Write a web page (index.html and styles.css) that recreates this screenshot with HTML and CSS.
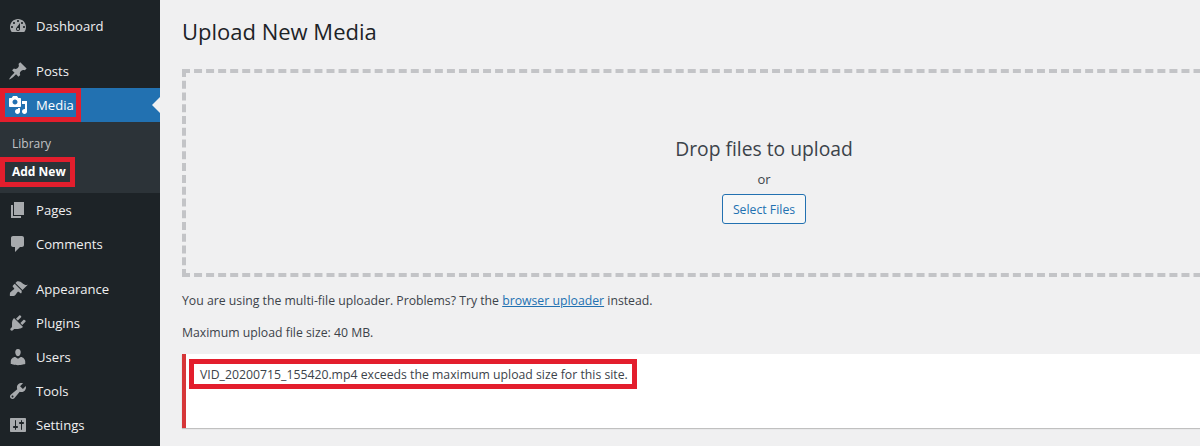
FILE: index.html
```html
<!DOCTYPE html>
<html lang="en">
<head>
<meta charset="utf-8">
<title>Upload New Media</title>
<link rel="stylesheet" href="styles.css">
</head>
<body>
<div class="app">
  <nav class="side">
    <a class="item"><svg class="ico" viewBox="0 0 20 20"><path fill-rule="evenodd" d="M3.76 16h12.48c1.1-1.37 1.76-3.11 1.76-5 0-4.42-3.58-8-8-8s-8 3.58-8 8c0 1.89.66 3.63 1.76 5zM10 4c.55 0 1 .45 1 1s-.45 1-1 1-1-.45-1-1 .45-1 1-1zM6 6c.55 0 1 .45 1 1s-.45 1-1 1-1-.45-1-1 .45-1 1-1zm8 0c.55 0 1 .45 1 1s-.45 1-1 1-1-.45-1-1 .45-1 1-1zm-5.37 5.55L12 7v6c0 1.1-.9 2-2 2s-2-.9-2-2c0-.57.24-1.08.63-1.45zM4 10c.55 0 1 .45 1 1s-.45 1-1 1-1-.45-1-1 .45-1 1-1zm12 0c.55 0 1 .45 1 1s-.45 1-1 1-1-.45-1-1 .45-1 1-1zm-5 3c0-.55-.45-1-1-1s-1 .45-1 1 .45 1 1 1 1-.45 1-1z"/></svg>Dashboard</a>
    <div class="sep"></div>
    <a class="item"><svg class="ico" viewBox="0 0 20 20"><path d="M10.44 3.02l1.82-1.82 6.36 6.35-1.83 1.82c-1.05-.68-2.48-.57-3.41.36l-.75.75c-.92.93-1.04 2.35-.35 3.41l-1.83 1.82-2.41-2.41-2.8 2.79c-.42.42-3.38 2.71-3.8 2.29s1.86-3.39 2.28-3.81l2.79-2.79L4.1 9.36l1.83-1.82c1.05.69 2.48.57 3.4-.36l.75-.75c.93-.92 1.05-2.35.36-3.41z"/></svg>Posts</a>
    <a class="item current"><svg class="ico" viewBox="0 0 20 20"><path fill-rule="evenodd" d="M13 11V4c0-.55-.45-1-1-1h-1.67L9 1H5L3.67 3H2c-.55 0-1 .45-1 1v7c0 .55.45 1 1 1h10c.55 0 1-.45 1-1zM7 4.5c1.38 0 2.5 1.12 2.5 2.5S8.38 9.5 7 9.5 4.5 8.38 4.5 7 5.62 4.5 7 4.5zM14 6h5v10.5c0 1.38-1.12 2.5-2.5 2.5S14 17.88 14 16.5s1.12-2.5 2.5-2.5c.17 0 .34.02.5.05V9h-3V6zm-4 8.05V13h2v3.5c0 1.38-1.12 2.5-2.5 2.5S7 17.88 7 16.5 8.12 14 9.5 14c.17 0 .34.02.5.05z"/></svg>Media<span class="mark mark-media"></span></a>
    <div class="sub">
      <a class="sub-item">Library</a>
      <a class="sub-item strong">Add New<span class="mark mark-add"></span></a>
    </div>
    <a class="item"><svg class="ico" viewBox="0 0 20 20"><path d="M6 15V2h10v13H6zm-1 1h8v2H3V5h2v11z"/></svg>Pages</a>
    <a class="item"><svg class="ico" viewBox="0 0 20 20"><path d="M5 2h9c1.1 0 2 .9 2 2v7c0 1.1-.9 2-2 2h-2l-5 5v-5H5c-1.1 0-2-.9-2-2V4c0-1.1.9-2 2-2z"/></svg>Comments</a>
    <div class="sep"></div>
    <a class="item"><svg class="ico" viewBox="0 0 20 20"><path d="M14.48 11.06L7.41 3.99l1.5-1.5c.5-.56 2.3-.47 3.51.32 1.21.8 1.43 1.28 2.91 2.1 1.18.64 2.45 1.26 4.45.85zm-.71.71L6.7 4.7 4.93 6.47c-.39.39-.39 1.02 0 1.41l1.06 1.06c.39.39.39 1.03 0 1.42-.6.6-1.43 1.11-2.21 1.69-.35.26-.7.53-1.01.84C1.43 13.23 1.96 17 2 17s3.77.57 5.11-.77c.31-.31.58-.66.84-1.01.58-.78 1.09-1.61 1.69-2.21.39-.39 1.02-.39 1.41 0l1.06 1.06c.39.39 1.02.39 1.41 0z"/></svg>Appearance</a>
    <a class="item"><svg class="ico" viewBox="0 0 20 20"><path d="M13.11 4.36L9.87 7.6 8 5.73l3.24-3.24c.35-.34 1.05-.2 1.56.32.52.51.66 1.21.31 1.55zm-8 1.77l.91-1.12 9.01 9.01-1.19.84c-.71.71-2.63 1.16-3.82 1.16H6.14L4.9 17.26c-.59.59-1.54.59-2.12 0-.59-.58-.59-1.53 0-2.12l1.24-1.24v-3.88c0-1.13.4-3.19 1.09-3.89zm7.26 3.97l3.24-3.24c.34-.35 1.04-.21 1.55.31.52.51.66 1.21.31 1.55l-3.24 3.25z"/></svg>Plugins</a>
    <a class="item"><svg class="ico" viewBox="0 0 20 20"><path d="M10 9.25c-2.27 0-2.73-3.44-2.73-3.44C7 4.02 7.82 2 9.97 2c2.16 0 2.98 2.02 2.71 3.81 0 0-.41 3.44-2.68 3.44zm0 2.57L12.72 10c2.39 0 4.52 2.33 4.52 4.53v2.49s-3.65 1.13-7.24 1.13c-3.65 0-7.24-1.13-7.24-1.13v-2.49c0-2.25 1.94-4.48 4.47-4.48z"/></svg>Users</a>
    <a class="item"><svg class="ico" viewBox="0 0 20 20"><path fill-rule="evenodd" d="M16.68 9.77c-1.34 1.34-3.3 1.67-4.95.99l-5.41 6.52c-.99.99-2.59.99-3.58 0s-.99-2.59 0-3.57l6.52-5.42c-.68-1.65-.35-3.61.99-4.95 1.28-1.28 3.12-1.62 4.72-1.06l-2.89 2.89 2.82 2.82 2.86-2.87c.53 1.58.18 3.39-1.08 4.65zM3.81 16.21c.4.39 1.04.39 1.43 0 .4-.4.4-1.04 0-1.43-.39-.4-1.03-.4-1.43 0-.39.39-.39 1.03 0 1.43z"/></svg>Tools</a>
    <a class="item"><svg class="ico" viewBox="0 0 20 20"><path fill-rule="evenodd" d="M18 16V4c0-.55-.45-1-1-1H3c-.55 0-1 .45-1 1v12c0 .55.45 1 1 1h14c.55 0 1-.45 1-1zM8 11h1c.55 0 1 .45 1 1s-.45 1-1 1H8v1.5c0 .28-.22.5-.5.5s-.5-.22-.5-.5V13H6c-.55 0-1-.45-1-1s.45-1 1-1h1V5.5c0-.28.22-.5.5-.5s.5.22.5.5V11zm5-2h-1c-.55 0-1-.45-1-1s.45-1 1-1h1V5.5c0-.28.22-.5.5-.5s.5.22.5.5V7h1c.55 0 1 .45 1 1s-.45 1-1 1h-1v5.5c0 .28-.22.5-.5.5s-.5-.22-.5-.5V9z"/></svg>Settings</a>
  </nav>
  <main class="main">
    <h1 class="title">Upload New Media</h1>
    <section class="drop">
      <p class="drop-head">Drop files to upload</p>
      <p class="drop-or">or</p>
      <button class="btn">Select Files</button>
    </section>
    <p class="note first">You are using the multi-file uploader. Problems? Try the <a class="link">browser uploader</a> instead.</p>
    <p class="note second">Maximum upload file size: 40 MB.</p>
    <div class="error"><span class="error-text">VID_20200715_155420.mp4 exceeds the maximum upload size for this site.<span class="mark mark-error"></span></span></div>
  </main>
</div>
</body>
</html>
```
FILE: styles.css
```css
* { box-sizing: border-box; }
html, body { margin: 0; height: 100%; overflow: hidden; }
body { background: #f0f0f1; color: #3c434a; font-family: "Open Sans", "Liberation Sans", sans-serif; font-size: 12.25px; }
.app { display: flex; height: 446px; overflow: hidden; }
.side { flex: 0 0 160px; background: #1d2327; padding-top: 9px; }
.item { position: relative; display: flex; align-items: center; height: 34px; color: #f0f0f1; font-size: 13.1px; }
.ico { flex: 0 0 20px; width: 20px; height: 20px; margin: 0 8px 0 8px; fill: #a7aaad; }
.sep { height: 11px; }
.current { background: #2271b1; color: #fff; }
.current .ico { fill: #fff; }
.current::after { content: ""; position: absolute; right: 0; top: 9px; border: 8px solid transparent; border-left-width: 0; border-right-color: #f0f0f1; }
.sub { background: #2c3338; height: 71px; padding-top: 7px; }
.sub-item { position: relative; display: flex; align-items: center; height: 28px; padding-left: 12px; color: #c3c4c7; font-size: 12px; }
.strong { color: #fff; font-weight: 700; }
.mark { position: absolute; border: 5px solid #e31e2d; pointer-events: none; }
.mark-media { left: 0; top: 0; width: 81px; height: 34px; }
.mark-add { left: 0; top: 0; width: 75px; height: 30px; }
.mark-error { left: -11px; top: -7px; width: 448px; height: 30px; }
.main { flex: 1 1 auto; min-width: 0; padding-left: 22px; }
.title { margin: 15px 0 0; height: 32px; font-size: 22px; font-weight: 400; line-height: 32px; color: #1d2327; white-space: nowrap; }
.drop { width: 1164px; height: 208px; margin-top: 22px; border: 4px dashed #c3c4c7; display: flex; flex-direction: column; align-items: center; padding-top: 63px; }
.drop-head { margin: 0; font-size: 19.3px; line-height: 26px; }
.drop-or { margin: 8px 0 0; font-size: 13px; line-height: 18px; }
.btn { margin-top: 6px; height: 30px; padding: 0 10px; background: #f6f7f7; border: 1px solid #2271b1; border-radius: 3px; color: #2271b1; font: inherit; }
.note { margin: 0; line-height: 18px; }
.first { margin-top: 15px; }
.second { margin-top: 14px; }
.link { color: #2271b1; text-decoration: underline; }
.error { width: 1164px; height: 74px; margin-top: 12px; background: #fff; border-left: 4px solid #d63638; box-shadow: 0 1px 1px rgba(0,0,0,.2); padding: 12px 0 0 14px; line-height: 18px; }
.error-text { position: relative; display: inline-block; }
```
